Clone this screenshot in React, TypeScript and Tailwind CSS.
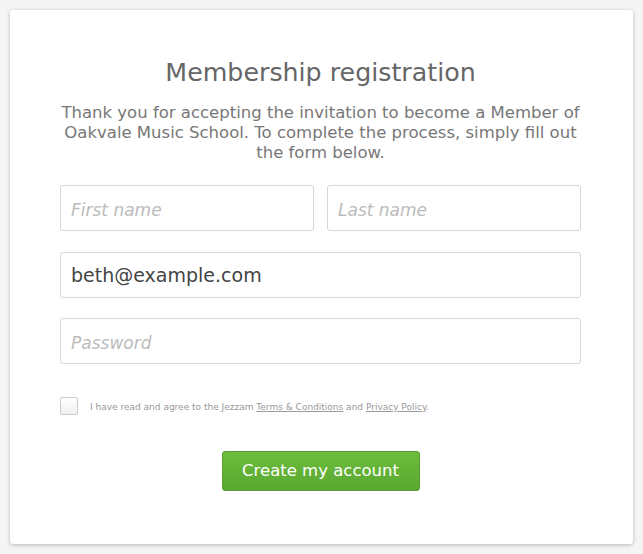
export default function App() {
  return (
    <div className="min-h-[554px] bg-[#f5f5f5] p-[10px] font-['DejaVu_Sans',Verdana,sans-serif]">
      <div className="flex h-[534px] flex-col items-center rounded-[3px] bg-white pl-[50px] pr-[52px] pt-[45px] shadow-[0_1px_4px_rgba(0,0,0,0.25)]">
        <h1 className="text-[25.3px] leading-[36px] text-[#666]">Membership registration</h1>
        <p className="mt-[12px] text-center text-[16.5px] leading-[20px] text-[#777]">
          Thank you for accepting the invitation to become a Member of Oakvale Music School. To complete the process, simply fill out the form below.
        </p>
        <form className="mt-[22px] flex w-full flex-col gap-[21px]">
          <div className="flex gap-[13px]">
            <input
              placeholder="First name"
              className="h-[46px] w-full rounded-[3px] border border-[#d6d6d6] px-[10px] pt-[3px] text-[17px] text-[#444] outline-none placeholder:italic placeholder:text-[#bbb]"
            />
            <input
              placeholder="Last name"
              className="h-[46px] w-full rounded-[3px] border border-[#d6d6d6] px-[10px] pt-[3px] text-[17px] text-[#444] outline-none placeholder:italic placeholder:text-[#bbb]"
            />
          </div>
          <input
            defaultValue="beth@example.com"
            className="h-[46px] w-full rounded-[3px] border border-[#d6d6d6] px-[10px] text-[19px] text-[#444] outline-none"
          />
          <input
            type="password"
            placeholder="Password"
            className="-mt-[1px] h-[46px] w-full rounded-[3px] border border-[#d6d6d6] px-[10px] pt-[3px] text-[17px] text-[#444] outline-none placeholder:italic placeholder:text-[#bbb]"
          />
          <label className="mt-[12px] flex items-center gap-[12px] text-[9px] text-[#999]">
            <span className="h-[18px] w-[18px] rounded-[2px] border border-[#ccc] bg-gradient-to-b from-white to-[#f0f0f0]" />
            <span className="pt-[3px]">
              I have read and agree to the Jezzam <span className="underline">Terms &amp; Conditions</span> and{' '}
              <span className="underline">Privacy Policy</span>.
            </span>
          </label>
          <div className="mt-[15px] flex justify-center">
            <button
              type="button"
              className="h-[40px] w-[198px] rounded-[3px] border border-[#5a9e31] bg-gradient-to-b from-[#6cbd3c] to-[#5aa831] text-[16.5px] text-white"
            >
              Create my account
            </button>
          </div>
        </form>
      </div>
    </div>
  )
}
